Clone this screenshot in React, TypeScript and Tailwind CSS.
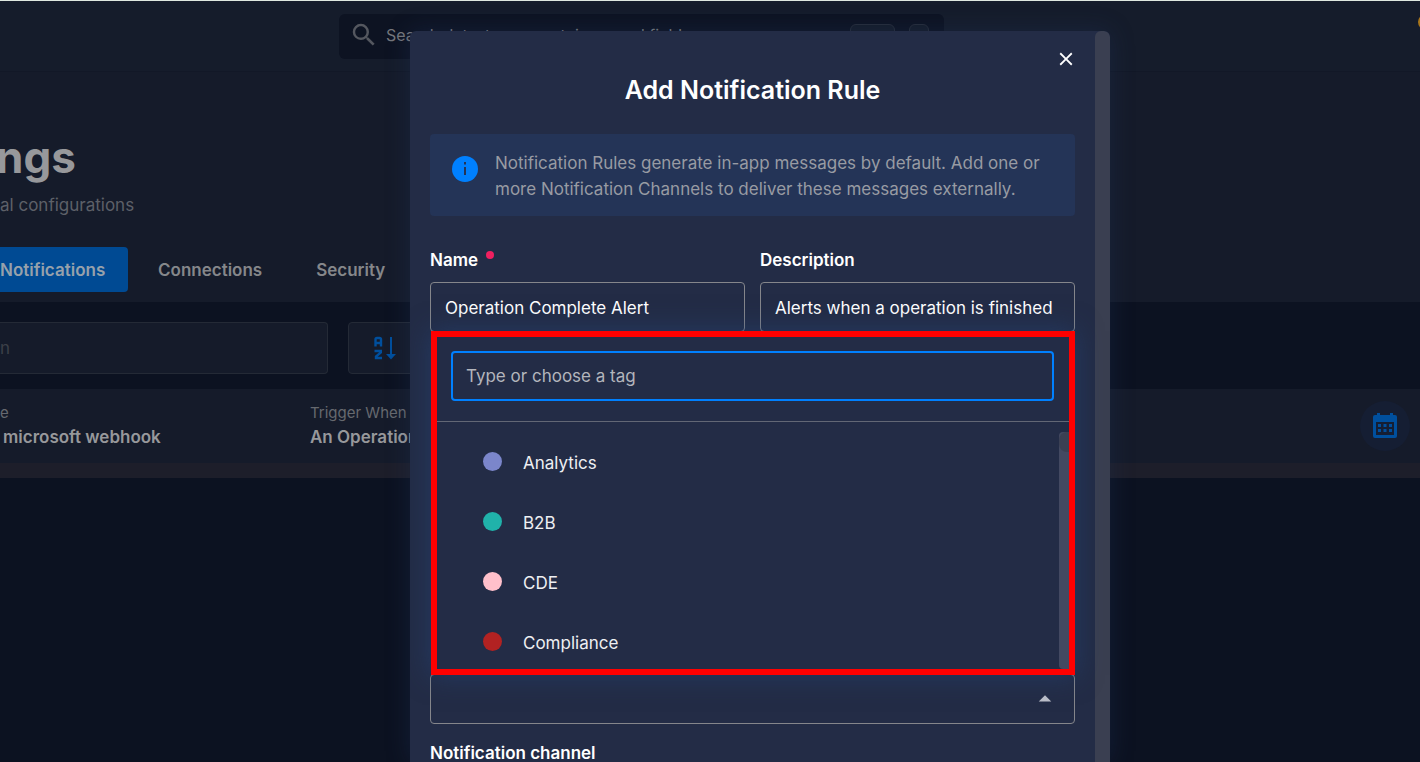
import { MdSearch, MdClose, MdArrowDropUp } from "react-icons/md";

const tags = [
  { name: "Analytics", dot: "bg-[#7b86cb]" },
  { name: "B2B", dot: "bg-[#20b2aa]" },
  { name: "CDE", dot: "bg-[#ffc0cb]" },
  { name: "Compliance", dot: "bg-[#b22222]" },
];

function TopBar() {
  return (
    <header className="flex h-[71px] justify-between border-t border-[#dfe8e0] bg-[#151c2b] pl-[339px] pt-[13px]">
      <label className="flex h-[45px] w-[605px] items-center rounded-md bg-[#0d1322] px-[10px] pb-[3px]">
        <MdSearch className="size-[30px] shrink-0 text-[#54575f]" />
        <input
          type="search"
          aria-label="Search"
          placeholder="Search datastores, containers and fields"
          className="ml-[7px] min-w-0 grow bg-transparent text-[16px] outline-none placeholder:text-[#75777c]"
        />
        <kbd className="mr-[14px] h-[22px] w-[45px] rounded-md border border-[#262c39] bg-[#151c2a]" />
        <kbd className="mr-[5px] h-[22px] w-5 rounded-md border border-[#262c39] bg-[#151c2a]" />
      </label>
      <span className="-mr-[14px] size-4 rounded-full bg-[#a9761a]" />
    </header>
  );
}

function Page() {
  return (
    <div className="min-h-screen bg-[#0c1221] text-[#97989b]">
      <TopBar />
      <section className="border-t border-[#121827] bg-[#151b2a] pb-[9px] pt-14">
        <h1 className="-ml-1 text-[44px] font-bold leading-[58px]">ngs</h1>
        <p className="mt-[6px] text-[17px] leading-[26px] text-[#5d6068]">al configurations</p>
        <nav className="mt-[29px] flex gap-[30px] text-[17px] font-semibold leading-[45px] text-[#85878a]">
          <a href="#notifications" className="h-[45px] w-32 rounded-r-[4px] bg-[#004a93] pt-px text-[#97a1ab]">Notifications</a>
          <a href="#connections" className="pt-px">Connections</a>
          <a href="#security" className="ml-6 pt-px">Security</a>
        </nav>
      </section>
      <div className="flex gap-5 py-5">
        <input
          aria-label="Search rules"
          placeholder="n"
          className="h-[52px] w-[328px] rounded-r-[4px] border border-l-0 border-[#242a36] bg-[#151b2a] pr-3 text-[17px] outline-none placeholder:text-[#3c4048]"
        />
        <button
          aria-label="Sort"
          className="flex h-[52px] w-[74px] items-center justify-center rounded-[4px] border border-[#242a36] bg-[#151b2a]"
        >
          <svg viewBox="0 0 22 24" className="h-6 w-[22px]" fill="none" stroke="#004f9d" strokeWidth="2.4">
            <path d="M1.500 10.500V3.500Q1.500 2 3 2H5.500Q7 2 7 3.500V10.500M1.500 7H7" />
            <path d="M.5 15H6.800V16.500L2 20.500V22H8" />
            <path d="M17 1V19" strokeWidth="2" />
            <path d="M12 18H22L17 23.500Z" fill="#004f9d" stroke="none" />
          </svg>
        </button>
      </div>
      <div className="-mt-[5px] flex h-[89px] items-center border-b-[15px] border-[#1d1e2a] bg-[#151b2a]">
        <div className="w-[310px] pb-[2px]">
          <div className="text-[15px] leading-6 text-[#66696f]">e</div>
          <div className="pl-[3px] text-[17px] font-semibold leading-6">microsoft webhook</div>
        </div>
        <div className="grow pb-[2px]">
          <div className="text-[15px] leading-6 text-[#66696f]">Trigger When</div>
          <div className="text-[17px] font-semibold leading-6">An Operation</div>
        </div>
        <button
          aria-label="Schedule"
          className="mr-[10px] flex size-[50px] items-center justify-center rounded-full bg-[#151e33]"
        >
          <svg viewBox="0 0 24 26" className="h-[26px] w-6" fill="#004f9d">
            <path
              fillRule="evenodd"
              d="M4 0H7V2H17V0H20V2H22Q24 2 24 4V23Q24 25 22 25H2Q0 25 0 23V4Q0 2 2 2H4ZM3 9V22H21V9Z"
            />
            <path d="M5 11h3v3H5zM10.500 11h3v3h-3zM16 11h3v3h-3zM5 16h3v3H5zM10.500 16h3v3h-3zM16 16h3v3h-3z" />
          </svg>
        </button>
      </div>
    </div>
  );
}

function TagMenu() {
  return (
    <div className="absolute left-px right-0 bottom-[49px] flex h-[344px] flex-col border-6 border-[#ff0000] bg-[#232c46] shadow-[0_0_25px_rgba(36,69,120,0.6)]">
      <div className="border-b border-[#626775] pb-5 pl-[14px] pr-[15px] pt-[14px]">
        <input
          aria-label="Tag"
          placeholder="Type or choose a tag"
          className="h-[50px] w-full rounded-[4px] border-2 border-[#0080ff] px-[13px] text-[17px] outline-none placeholder:text-[#b3b5bc]"
        />
      </div>
      <div className="flex min-h-0 grow justify-between pt-[10px]">
        <ul>
          {tags.map((tag) => (
            <li key={tag.name} className="flex h-[60px] gap-[21px] pl-[46px] pt-5 text-[17px] leading-[22px] text-[#eeeff2]">
              <span className={"size-[19px] rounded-full " + tag.dot} />
              {tag.name}
            </li>
          ))}
        </ul>
        <div className="w-[10px] overflow-hidden rounded-l-[4px] bg-[#434961]">
          <div className="h-5 rounded-l-lg bg-[#3b4053]" />
        </div>
      </div>
    </div>
  );
}

function Dialog() {
  return (
    <div
      role="dialog"
      aria-labelledby="dialog-title"
      className="absolute left-1/2 top-[31px] flex h-[calc(100%-31px)] w-[700px] -translate-x-[300px] overflow-hidden rounded-t-[6px] bg-[#232c46] text-[17px] text-white shadow-[0_0_24px_rgba(36,60,110,0.3)]"
    >
      <form className="min-w-0 grow px-5 pt-[17px]">
        <div className="flex justify-end">
          <button type="button" aria-label="Close" className="flex h-[22px] w-[18px] items-center justify-center">
            <MdClose className="size-[22px] shrink-0" />
          </button>
        </div>
        <h2 id="dialog-title" className="mb-7 mt-1 text-center text-[25px] font-semibold leading-8">
          Add Notification Rule
        </h2>
        <div className="flex h-[82px] rounded-[4px] bg-[#243457] pl-[22px] pt-4 leading-[26px] text-[#989ba3]">
          <svg viewBox="0 0 26 26" className="mr-[17px] mt-[6px] size-[26px] shrink-0">
            <circle cx="13" cy="13" r="13" fill="#0080ff" />
            <path d="M12 6h2v2.500h-2zM12 11h2v8h-2z" fill="#243457" />
          </svg>
          <p>
            Notification Rules generate in-app messages by default. Add one or<br />
            more Notification Channels to deliver these messages externally.
          </p>
        </div>
        <div className="mt-8 grid grid-cols-2 gap-[15px]">
          <label className="font-semibold leading-6">
            <span className="flex">
              Name
              <span className="ml-2 mt-[3px] size-2 rounded-full bg-[#f02060]" />
            </span>
            <input
              defaultValue="Operation Complete Alert"
              className="mt-[10px] h-[50px] w-full rounded-[4px] border border-[#85868b] px-[14px] pt-[2px] font-normal outline-none"
            />
          </label>
          <label className="font-semibold leading-6">
            <span className="block">Description</span>
            <input
              defaultValue="Alerts when a operation is finished"
              className="mt-[10px] h-[50px] w-full rounded-[4px] border border-[#85868b] px-[14px] pt-[2px] font-normal outline-none"
            />
          </label>
        </div>
        <div className="relative mt-[342px]">
          <button
            type="button"
            aria-label="Tags"
            className="flex h-[50px] w-full items-center justify-end rounded-[4px] border border-[#85868b] pr-[14px] text-[#bdc0ca]"
          >
            <MdArrowDropUp className="size-[30px]" />
          </button>
          <TagMenu />
        </div>
        <h3 className="mt-4 font-semibold leading-[26px]">Notification channel</h3>
      </form>
      <div className="w-[15px] shrink-0 rounded-t-[6px] bg-[#3a3f51]" />
    </div>
  );
}

export default function App() {
  return (
    <main className="relative h-screen overflow-hidden font-['Inter',sans-serif]">
      <Page />
      <Dialog />
    </main>
  );
}
